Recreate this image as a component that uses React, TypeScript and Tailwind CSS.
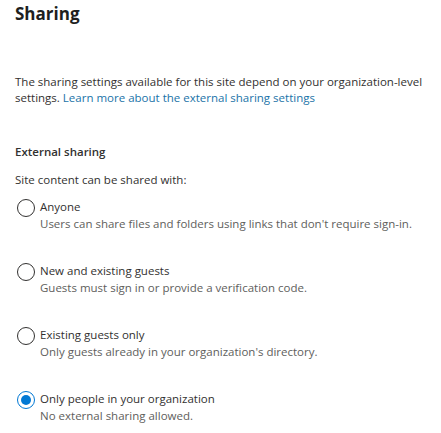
import React, { useState } from 'react';

type Option = {
  id: string;
  label: string;
  description: string;
};

const options: Option[] = [
  { id: 'anyone', label: 'Anyone', description: "Users can share files and folders using links that don't require sign-in." },
  { id: 'new', label: 'New and existing guests', description: 'Guests must sign in or provide a verification code.' },
  { id: 'existing', label: 'Existing guests only', description: "Only guests already in your organization's directory." },
  { id: 'org', label: 'Only people in your organization', description: 'No external sharing allowed.' },
];

const RadioOption: React.FC<{ option: Option; checked: boolean; onSelect: () => void }> = ({ option, checked, onSelect }) => (
  <button onClick={onSelect} className="flex items-start text-left h-16">
    <span
      className={`mt-[1px] w-[18px] h-[18px] rounded-full border flex items-center justify-center shrink-0 ${
        checked ? 'border-[#0078d4]' : 'border-[#323130]'
      }`}
    >
      {checked && <span className="w-[10px] h-[10px] rounded-full bg-[#0078d4]"></span>}
    </span>
    <span className="ml-[5px] flex flex-col">
      <span className="text-[11.5px] leading-[17px] text-[#323130]">{option.label}</span>
      <span className="text-[11.5px] leading-[17px] text-[#605e5c]">{option.description}</span>
    </span>
  </button>
);

const App: React.FC = () => {
  const [selected, setSelected] = useState('org');

  return (
    <div className="w-[441px] h-[433px] bg-white overflow-hidden px-[15px] pt-[2px] font-['Open_Sans',sans-serif]">
      <h1 className="text-[17px] leading-[24px] font-bold text-[#201f1e]">Sharing</h1>

      <p className="mt-[48px] text-[11.5px] leading-[16px] text-[#323130]">
        The sharing settings available for this site depend on your organization-level settings.{' '}
        <a href="#" className="text-[#1a73a8]">Learn more about the external sharing settings</a>
      </p>

      <h2 className="mt-[37px] text-[11.5px] leading-[17px] font-semibold text-[#323130]">External sharing</h2>
      <p className="mt-[11px] text-[11.5px] leading-[17px] text-[#323130]">Site content can be shared with:</p>

      <div className="mt-[10px] flex flex-col pl-[2px]">
        {options.map(o => (
          <RadioOption key={o.id} option={o} checked={selected === o.id} onSelect={() => setSelected(o.id)} />
        ))}
      </div>
    </div>
  );
};

export default App;
